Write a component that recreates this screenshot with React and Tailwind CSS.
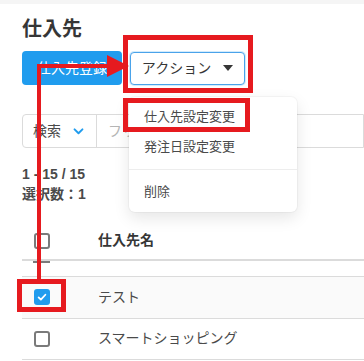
import React from 'react';

const font = { fontFamily: '"Liberation Sans", "Noto Sans CJK JP", sans-serif' };

function Checkbox({ checked }) {
  if (checked) {
    return (
      <span className="flex h-4 w-4 items-center justify-center rounded-[3px] bg-[#209cee]">
        <svg viewBox="0 0 16 16" className="h-3 w-3" fill="none" stroke="white" strokeWidth="2.4" strokeLinecap="round" strokeLinejoin="round">
          <path d="M3.5 8.5l3 3 6-6.5" />
        </svg>
      </span>
    );
  }
  return <span className="block h-4 w-4 rounded-[3px] border-2 border-[#7a7a7a] bg-white" />;
}

export default function App() {
  return (
    <div className="relative h-[361px] w-[364px] overflow-hidden bg-white text-[#4a4a4a]" style={font}>
      <div className="h-1 bg-[#f5f5f5]" />

      <div className="pl-[22px]">
        <h1 className="pt-[10px] text-[20px] font-bold leading-[30px] text-[#363636]">仕入先</h1>

        <div className="mt-[7px] flex items-center gap-2">
          <button className="h-[34px] w-[100px] rounded-[4px] bg-[#209cee] text-[14px] text-white">仕入先登録</button>
          <div className="relative">
            <button className="flex h-[33px] w-[115px] items-center justify-center gap-3 rounded-[4px] border border-[#4aa3ea] bg-white text-[14px] text-[#363636] shadow-[0_0_0_1px_rgba(32,156,238,0.2)]">
              <span>アクション</span>
              <svg viewBox="0 0 10 6" className="h-[6px] w-[10px]" fill="#363636"><path d="M0 0h10L5 6z" /></svg>
            </button>
          </div>
        </div>

        <div className="mt-[29px] flex h-[34px] items-center rounded-l-[4px] border border-[#dbdbdb] text-[14px]">
          <div className="flex h-full w-[74px] items-center gap-3 border-r border-[#dbdbdb] pl-[10px]">
            <span>検索</span>
            <svg viewBox="0 0 12 8" className="h-[7px] w-[11px]" fill="none" stroke="#209cee" strokeWidth="2.2" strokeLinecap="round" strokeLinejoin="round">
              <path d="M1.5 1.5L6 6l4.5-4.5" />
            </svg>
          </div>
          <span className="pl-[11px] text-[#b5b5b5]">フリーワード</span>
        </div>

        <div className="mt-[16px] text-[14px] font-bold leading-[20px] text-[#4a4a4a]">
          <p>1 - 15 / 15</p>
          <p>選択数：1</p>
        </div>

        <table className="mt-[18px] w-[342px] border-collapse text-[14px]">
          <thead>
            <tr className="h-[38px] border-b-2 border-[#dbdbdb]">
              <th className="w-[76px] pl-[12px] text-left align-middle">
                <Checkbox />
              </th>
              <th className="text-left font-bold text-[#363636]">仕入先名</th>
            </tr>
          </thead>
          <tbody>
            <tr className="h-[16px] border-b border-[#dbdbdb]">
              <td className="pl-[11px] align-top">
                <span className="block h-[2px] w-[17px] bg-[#7a7a7a]" />
              </td>
              <td />
            </tr>
            <tr className="h-[42px] border-b border-[#dbdbdb] bg-[#fafafa]">
              <td className="pl-[12px]"><Checkbox checked /></td>
              <td>テスト</td>
            </tr>
            <tr className="h-[41px] border-b border-[#dbdbdb]">
              <td className="pl-[12px]"><Checkbox /></td>
              <td>スマートショッピング</td>
            </tr>
          </tbody>
        </table>
      </div>

      {/* dropdown menu */}
      <div className="absolute left-[129px] top-[97px] w-[168px] rounded-[6px] bg-white py-[5px] text-[13px] text-[#4a4a4a] shadow-[0_6px_16px_rgba(10,10,10,0.1),0_0_0_1px_rgba(10,10,10,0.03)]">
        <p className="px-[15px] py-[5px] leading-[20px]">仕入先設定変更</p>
        <p className="px-[15px] py-[5px] leading-[20px]">発注日設定変更</p>
        <div className="my-[7px] h-px bg-[#ededed]" />
        <p className="px-[15px] py-[5px] leading-[20px]">削除</p>
      </div>

      {/* annotations */}
      <div className="absolute left-[123px] top-[35px] h-[58px] w-[130px] border-[5px] border-[#e61a1f]" />
      <div className="absolute left-[123px] top-[98px] h-[34px] w-[127px] border-[5px] border-[#e61a1f]" />
      <div className="absolute left-[17px] top-[279px] h-[33px] w-[49px] border-[5px] border-[#e61a1f]" />
      <div className="absolute left-[37px] top-[64px] h-[216px] w-[4px] bg-[#e61a1f]" />
      <div className="absolute left-[37px] top-[64px] h-[4px] w-[74px] bg-[#e61a1f]" />
      <svg className="absolute left-[107px] top-[55px]" width="22" height="22" viewBox="0 0 22 22">
        <path d="M0 0L22 11L0 22z" fill="#e61a1f" />
      </svg>
    </div>
  );
}
